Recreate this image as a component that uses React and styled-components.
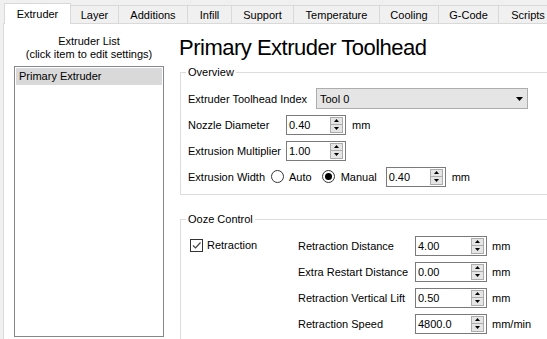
import React from 'react';
import styled, { createGlobalStyle } from 'styled-components';

const Global = createGlobalStyle`
  html, body { margin: 0; padding: 0; background: #f0f0f0; }
  body { font-family: "Liberation Sans", Arial, sans-serif; font-size: 11px; color: #000; }
  * { box-sizing: border-box; }
`;

const Window = styled.div`
  width: 547px;
  height: 339px;
  overflow: hidden;
  display: flex;
  flex-direction: column;
  background: #f0f0f0;
`;

const TabBar = styled.div`
  flex: none;
  display: flex;
  align-items: flex-end;
  height: 23px;
  padding-left: 4px;
`;

const Tab = styled.div`
  flex: none;
  width: ${p => p.$w}px;
  height: ${p => (p.$active ? 21 : 18)}px;
  margin-left: ${p => (p.$first ? 0 : -1)}px;
  margin-bottom: ${p => (p.$active ? -1 : 0)}px;
  padding-top: ${p => (p.$active ? 3 : 2)}px;
  border: 1px solid #d9d9d9;
  border-bottom: none;
  background: ${p => (p.$active ? '#fff' : '#f0f0f0')};
  position: relative;
  z-index: ${p => (p.$active ? 2 : 1)};
  text-align: center;
  line-height: 14px;
  white-space: nowrap;
`;

const Pane = styled.div`
  flex: 1;
  min-height: 0;
  margin-left: 3px;
  border-left: 1px solid #d9d9d9;
  border-top: 1px solid #d9d9d9;
  background: #fff;
  display: flex;
  overflow: hidden;
`;

const LeftCol = styled.div`
  flex: none;
  width: 176px;
  padding: 11px 0 0 10px;
  display: flex;
  flex-direction: column;
`;

const ListHeading = styled.div`
  width: 150px;
  text-align: center;
  line-height: 13px;
`;

const ListBox = styled.div`
  width: 150px;
  height: 271px;
  margin-top: 5px;
  border: 1px solid #828790;
  padding: 1px;
  flex: none;
`;

const ListItem = styled.div`
  height: 17px;
  line-height: 17px;
  padding-left: 3px;
  background: ${p => (p.$selected ? '#d9d9d9' : 'transparent')};
`;

const RightCol = styled.div`
  flex: none;
  width: 380px;
  padding-top: 11px;
  display: flex;
  flex-direction: column;
`;

const Title = styled.h1`
  margin: 0 0 0 -1px;
  font-size: 22px;
  line-height: 26px;
  font-weight: normal;
  letter-spacing: -0.5px;
  white-space: nowrap;
`;

const Group = styled.fieldset`
  margin: ${p => p.$mt}px 0 0 0;
  min-width: 0;
  border: 1px solid #dcdcdc;
  padding: ${p => p.$pt}px 8px 7px 7px;
`;

const Legend = styled.legend`
  padding: 0 2px;
  margin-left: -2px;
  line-height: 13px;
  font-size: 11px;
`;

const Rows = styled.div`
  display: flex;
  flex-direction: column;
  gap: 5px;
`;

const Row = styled.div`
  display: flex;
  align-items: center;
  height: 21px;
`;

const Label = styled.span`
  flex: none;
  width: ${p => (p.$w ? `${p.$w}px` : 'auto')};
  margin-left: ${p => p.$ml || 0}px;
  white-space: nowrap;
`;

const Combo = styled.div`
  flex: none;
  width: 212px;
  height: 21px;
  border: 1px solid #adadad;
  background: #e5e5e5;
  padding: 0 4px 0 3px;
  display: flex;
  align-items: center;
  justify-content: space-between;
`;

const SpinBox = styled.div`
  flex: none;
  width: ${p => p.$w}px;
  height: 20px;
  border: 1px solid #7a7a7a;
  background: #fff;
  padding-left: 2px;
  display: flex;
  align-items: center;
`;

const SpinValue = styled.span`
  flex: 1;
`;

const SpinButtons = styled.div`
  flex: none;
  width: 13px;
  height: 16px;
  margin-right: 2px;
  border: 1px solid #acacac;
  background: #e5e5e5;
  display: flex;
  flex-direction: column;
`;

const SpinBtn = styled.div`
  flex: 1;
  display: flex;
  align-items: center;
  justify-content: center;
  border-top: ${p => (p.$down ? '1px solid #acacac' : 'none')};
`;

const Unit = styled.span`
  margin-left: ${p => p.$ml || 6}px;
  white-space: nowrap;
`;

const Radio = styled.span`
  flex: none;
  width: 13px;
  height: 13px;
  border-radius: 50%;
  border: 1px solid #333;
  background: #fff;
  margin-left: ${p => p.$ml || 0}px;
  display: flex;
  align-items: center;
  justify-content: center;
  &::after {
    content: '';
    width: 7px;
    height: 7px;
    border-radius: 50%;
    background: ${p => (p.$checked ? '#000' : 'transparent')};
  }
`;

const OozeBody = styled.div`
  display: flex;
  align-items: flex-start;
`;

const CheckCol = styled.div`
  flex: none;
  width: 110px;
  height: 21px;
  display: flex;
  align-items: center;
  padding-left: 2px;
  gap: 4px;
`;

const CheckBox = styled.span`
  flex: none;
  width: 13px;
  height: 13px;
  border: 1px solid #333;
  background: #fff;
  margin-top: -1px;
  display: flex;
  align-items: center;
  justify-content: center;
`;

const CheckText = styled.span`
  margin-top: -1px;
`;

const OozeGrid = styled.div`
  display: grid;
  grid-template-columns: 117px 72px auto;
  grid-auto-rows: 21px;
  row-gap: 5px;
  align-items: center;
`;

const Spin = ({ w, value }) => (
  <SpinBox $w={w}>
    <SpinValue>{value}</SpinValue>
    <SpinButtons>
      <SpinBtn>
        <svg width="5" height="3" viewBox="0 0 5 3"><polygon points="0,3 5,3 2.5,0" fill="#000" /></svg>
      </SpinBtn>
      <SpinBtn $down>
        <svg width="5" height="3" viewBox="0 0 5 3"><polygon points="0,0 5,0 2.5,3" fill="#000" /></svg>
      </SpinBtn>
    </SpinButtons>
  </SpinBox>
);

const tabs = [
  ['Extruder', 67],
  ['Layer', 49],
  ['Additions', 70],
  ['Infill', 45],
  ['Support', 63],
  ['Temperature', 87],
  ['Cooling', 60],
  ['G-Code', 61],
  ['Scripts', 60],
];

const ooze = [
  ['Retraction Distance', '4.00', 'mm'],
  ['Extra Restart Distance', '0.00', 'mm'],
  ['Retraction Vertical Lift', '0.50', 'mm'],
  ['Retraction Speed', '4800.0', 'mm/min'],
];

export default function App() {
  return (
    <Window>
      <Global />
      <TabBar>
        {tabs.map(([t, w], i) => (
          <Tab key={t} $w={w} $first={i === 0} $active={i === 0}>{t}</Tab>
        ))}
      </TabBar>
      <Pane>
        <LeftCol>
          <ListHeading>Extruder List<br />(click item to edit settings)</ListHeading>
          <ListBox>
            <ListItem $selected>Primary Extruder</ListItem>
          </ListBox>
        </LeftCol>
        <RightCol>
          <Title>Primary Extruder Toolhead</Title>
          <Group $mt={5} $pt={9}>
            <Legend>Overview</Legend>
            <Rows>
              <Row>
                <Label $w={128}>Extruder Toolhead Index</Label>
                <Combo>
                  <span>Tool 0</span>
                  <svg width="7" height="4" viewBox="0 0 7 4"><polygon points="0,0 7,0 3.5,4" fill="#000" /></svg>
                </Combo>
              </Row>
              <Row>
                <Label $w={98}>Nozzle Diameter</Label>
                <Spin w={60} value="0.40" />
                <Unit>mm</Unit>
              </Row>
              <Row>
                <Label $w={98}>Extrusion Multiplier</Label>
                <Spin w={60} value="1.00" />
              </Row>
              <Row>
                <Label $w={83}>Extrusion Width</Label>
                <Radio />
                <Label $ml={5}>Auto</Label>
                <Radio $checked $ml={10} />
                <Label $ml={6} $w={45}>Manual</Label>
                <Spin w={60} value="0.40" />
                <Unit>mm</Unit>
              </Row>
            </Rows>
          </Group>
          <Group $mt={18} $pt={9}>
            <Legend>Ooze Control</Legend>
            <OozeBody>
              <CheckCol>
                <CheckBox>
                  <svg width="11" height="11" viewBox="0 0 11 11">
                    <polyline points="2,5.5 4.5,8 9.5,2.5" fill="none" stroke="#444" strokeWidth="1.2" />
                  </svg>
                </CheckBox>
                <CheckText>Retraction</CheckText>
              </CheckCol>
              <OozeGrid>
                {ooze.map(([l, v, u]) => (
                  <React.Fragment key={l}>
                    <Label>{l}</Label>
                    <Spin w={72} value={v} />
                    <Unit $ml={5}>{u}</Unit>
                  </React.Fragment>
                ))}
              </OozeGrid>
            </OozeBody>
          </Group>
        </RightCol>
      </Pane>
    </Window>
  );
}
